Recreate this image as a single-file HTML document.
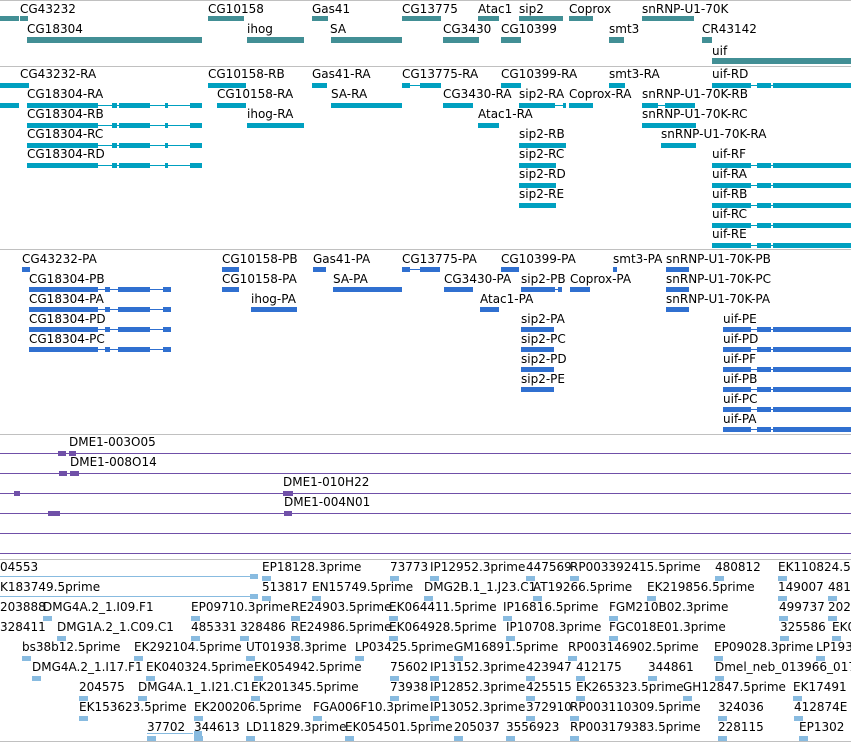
<!DOCTYPE html>
<html><head><meta charset="utf-8">
<style>
html,body{margin:0;padding:0;background:#fff;width:851px;height:742px;overflow:hidden;position:relative;font-family:"DejaVu Sans","Liberation Sans",sans-serif;}
.t{position:absolute;font-size:12px;line-height:14px;color:#000;white-space:nowrap;}
.b{position:absolute;}
.h{position:absolute;left:0;width:851px;height:1px;}
</style></head><body>
<div id="r"></div>
<script>
var R=document.getElementById('r');
function T(x,c,s){var d=document.createElement('div');d.className='t';d.style.left=x+'px';d.style.top=(c-7)+'px';d.textContent=s;R.appendChild(d);}
function B(x1,x2,y,h,col){var d=document.createElement('div');d.className='b';d.style.left=x1+'px';d.style.width=(x2-x1)+'px';d.style.top=y+'px';d.style.height=h+'px';d.style.background=col;R.appendChild(d);}
function H(y,col){var d=document.createElement('div');d.className='h';d.style.top=y+'px';d.style.background=col;R.appendChild(d);}
function G(segs,y,col,h){h=h||5;var a=segs[0][0],z=segs[segs.length-1][1];B(a,z,y+Math.floor(h/2),1,col);segs.forEach(function(s){B(s[0],s[1],y,h,col);});}
H(0,'#c0c0c0');H(66,'#c0c0c0');H(249,'#c0c0c0');H(434,'#c0c0c0');H(559,'#c0c0c0');H(741,'#c0c0c0');
// Section 1 genes
var TC='#428f95';
[[20,'CG43232'],[208,'CG10158'],[312,'Gas41'],[402,'CG13775'],[478,'Atac1'],[519,'sip2'],[569,'Coprox'],[642,'snRNP-U1-70K']].forEach(function(a){T(a[0],9,a[1]);});
[[0,19],[20,28],[208,244],[312,328],[402,441],[478,499],[519,563],[569,593],[642,694]].forEach(function(a){B(a[0],a[1],16,5,TC);});
[[27,'CG18304'],[247,'ihog'],[330,'SA'],[443,'CG3430'],[501,'CG10399'],[609,'smt3'],[702,'CR43142']].forEach(function(a){T(a[0],29,a[1]);});
[[27,202],[247,304],[331,402],[443,479],[501,521],[609,624],[702,712]].forEach(function(a){B(a[0],a[1],37,6,TC);});
T(712,51,'uif');B(712,851,58,6,TC);
// Section 2 transcripts
var C2='#00a0c0';
function row2(c,items){items.forEach(function(a){T(a[0],c,a[1]);});}
var cgT=[[27,98],[112,117],[119,150],[165,168],[190,202]];
var uifT=[[712,751],[757,771],[773,851]];
row2(74,[[20,'CG43232-RA'],[208,'CG10158-RB'],[312,'Gas41-RA'],[402,'CG13775-RA'],[501,'CG10399-RA'],[609,'smt3-RA'],[712,'uif-RD']]);
B(0,29,83,5,C2);B(208,246,83,5,C2);B(312,327,83,5,C2);G([[402,410],[420,430],[430,441]],83,C2);B(501,521,83,5,C2);B(609,625,83,5,C2);G(uifT,83,C2);
row2(94,[[27,'CG18304-RA'],[217,'CG10158-RA'],[331,'SA-RA'],[443,'CG3430-RA'],[519,'sip2-RA'],[569,'Coprox-RA'],[642,'snRNP-U1-70K-RB']]);
B(0,19,103,5,C2);G(cgT,103,C2);B(217,246,103,5,C2);B(331,402,103,5,C2);B(443,473,103,5,C2);G([[519,555],[563,566]],103,C2);B(569,593,103,5,C2);G([[642,658],[665,695]],103,C2);
row2(114,[[27,'CG18304-RB'],[247,'ihog-RA'],[478,'Atac1-RA'],[642,'snRNP-U1-70K-RC']]);
G(cgT,123,C2);B(247,304,123,5,C2);B(478,499,123,5,C2);B(642,696,123,5,C2);
row2(134,[[27,'CG18304-RC'],[519,'sip2-RB'],[661,'snRNP-U1-70K-RA']]);
G(cgT,143,C2);B(519,566,143,5,C2);B(661,696,143,5,C2);
row2(154,[[27,'CG18304-RD'],[519,'sip2-RC'],[712,'uif-RF']]);
G(cgT,163,C2);B(519,556,163,5,C2);G(uifT,163,C2);
row2(174,[[519,'sip2-RD'],[712,'uif-RA']]);B(519,556,183,5,C2);G(uifT,183,C2);
row2(194,[[519,'sip2-RE'],[712,'uif-RB']]);B(519,556,203,5,C2);G(uifT,203,C2);
row2(214,[[712,'uif-RC']]);G(uifT,223,C2);
row2(234,[[712,'uif-RE']]);G(uifT,243,C2);
// Section 3 proteins
var C3='#3070d0';
var cgP=[[29,98],[105,110],[118,150],[163,171]];
var uifP=[[723,751],[757,771],[773,851]];
row2(259,[[22,'CG43232-PA'],[222,'CG10158-PB'],[313,'Gas41-PA'],[402,'CG13775-PA'],[501,'CG10399-PA'],[613,'smt3-PA'],[666,'snRNP-U1-70K-PB']]);
B(22,30,267,5,C3);B(222,239,267,5,C3);B(313,326,267,5,C3);G([[402,410],[420,440]],267,C3);B(501,519,267,5,C3);B(613,617,267,5,C3);B(666,689,267,5,C3);
row2(279,[[29,'CG18304-PB'],[222,'CG10158-PA'],[333,'SA-PA'],[444,'CG3430-PA'],[521,'sip2-PB'],[570,'Coprox-PA'],[666,'snRNP-U1-70K-PC']]);
G(cgP,287,C3);B(222,239,287,5,C3);B(333,402,287,5,C3);B(444,473,287,5,C3);G([[521,555],[558,562]],287,C3);B(570,590,287,5,C3);B(666,689,287,5,C3);
row2(299,[[29,'CG18304-PA'],[251,'ihog-PA'],[480,'Atac1-PA'],[666,'snRNP-U1-70K-PA']]);
G(cgP,307,C3);B(251,297,307,5,C3);B(480,499,307,5,C3);B(666,689,307,5,C3);
row2(319,[[29,'CG18304-PD'],[521,'sip2-PA'],[723,'uif-PE']]);G(cgP,327,C3);B(521,554,327,5,C3);G(uifP,327,C3);
row2(339,[[29,'CG18304-PC'],[521,'sip2-PC'],[723,'uif-PD']]);G(cgP,347,C3);B(521,554,347,5,C3);G(uifP,347,C3);
row2(359,[[521,'sip2-PD'],[723,'uif-PF']]);B(521,554,367,5,C3);G(uifP,367,C3);
row2(379,[[521,'sip2-PE'],[723,'uif-PB']]);B(521,554,387,5,C3);G(uifP,387,C3);
row2(399,[[723,'uif-PC']]);G(uifP,407,C3);
row2(419,[[723,'uif-PA']]);G(uifP,427,C3);
// Purple section
var PU='#7050a8';
[453,473,493,513,533].forEach(function(y){H(y,PU);});
H(553,PU);
T(69,442,'DME1-003O05');T(70,462,'DME1-008O14');T(283,482,'DME1-010H22');T(284,502,'DME1-004N01');
B(58,66,451,5,PU);B(69,76,451,5,PU);B(59,67,471,5,PU);B(70,79,471,5,PU);B(14,20,491,5,PU);B(283,293,491,5,PU);B(48,60,511,5,PU);B(284,292,511,5,PU);
// Bottom ESTs
var LB='#88bbe0';
var rows=[
[[0,'04553'],[262,'EP18128.3prime'],[390,'73773'],[430,'IP12952.3prime'],[526,'447569'],[570,'RP003392415.5prime'],[715,'480812'],[778,'EK110824.5']],
[[0,'K183749.5prime'],[262,'513817'],[312,'EN15749.5prime'],[424,'DMG2B.1_1.J23.C1'],[533,'AT19266.5prime'],[647,'EK219856.5prime'],[778,'149007'],[828,'481']],
[[0,'203888'],[43,'DMG4A.2_1.I09.F1'],[191,'EP09710.3prime'],[291,'RE24903.5prime'],[389,'EK064411.5prime'],[503,'IP16816.5prime'],[609,'FGM210B02.3prime'],[779,'499737'],[828,'202']],
[[0,'328411'],[57,'DMG1A.2_1.C09.C1'],[191,'485331'],[240,'328486'],[291,'RE24986.5prime'],[389,'EK064928.5prime'],[506,'IP10708.3prime'],[609,'FGC018E01.3prime'],[780,'325586'],[832,'EK0']],
[[22,'bs38b12.5prime'],[134,'EK292104.5prime'],[246,'UT01938.3prime'],[355,'LP03425.5prime'],[454,'GM16891.5prime'],[568,'RP003146902.5prime'],[714,'EP09028.3prime'],[816,'LP193']],
[[32,'DMG4A.2_1.I17.F1'],[146,'EK040324.5prime'],[254,'EK054942.5prime'],[390,'75602'],[430,'IP13152.3prime'],[526,'423947'],[576,'412175'],[648,'344861'],[715,'Dmel_neb_013966_017']],
[[79,'204575'],[138,'DMG4A.1_1.I21.C1'],[251,'EK201345.5prime'],[390,'73938'],[430,'IP12852.3prime'],[526,'425515'],[576,'EK265323.5prime'],[683,'GH12847.5prime'],[793,'EK17491']],
[[79,'EK153623.5prime'],[194,'EK200206.5prime'],[313,'FGA006F10.3prime'],[430,'IP13052.3prime'],[526,'372910'],[570,'RP003110309.5prime'],[718,'324036'],[794,'412874E']],
[[147,'37702'],[194,'344613'],[246,'LD11829.3prime'],[345,'EK054501.5prime'],[454,'205037'],[506,'3556923'],[570,'RP003179383.5prime'],[718,'228115'],[799,'EP1302']]
];
rows.forEach(function(r,i){var c=567+20*i;r.forEach(function(a){T(a[0],c,a[1]);if(a[0]>0)B(a[0],a[0]+9,c+9,5,LB);});});
B(0,258,576,1,LB);B(250,258,574,5,LB);B(0,258,596,1,LB);B(250,258,594,5,LB);
B(147,193,733,1,LB);B(194,202,731,5,LB);
</script>
</body></html>
